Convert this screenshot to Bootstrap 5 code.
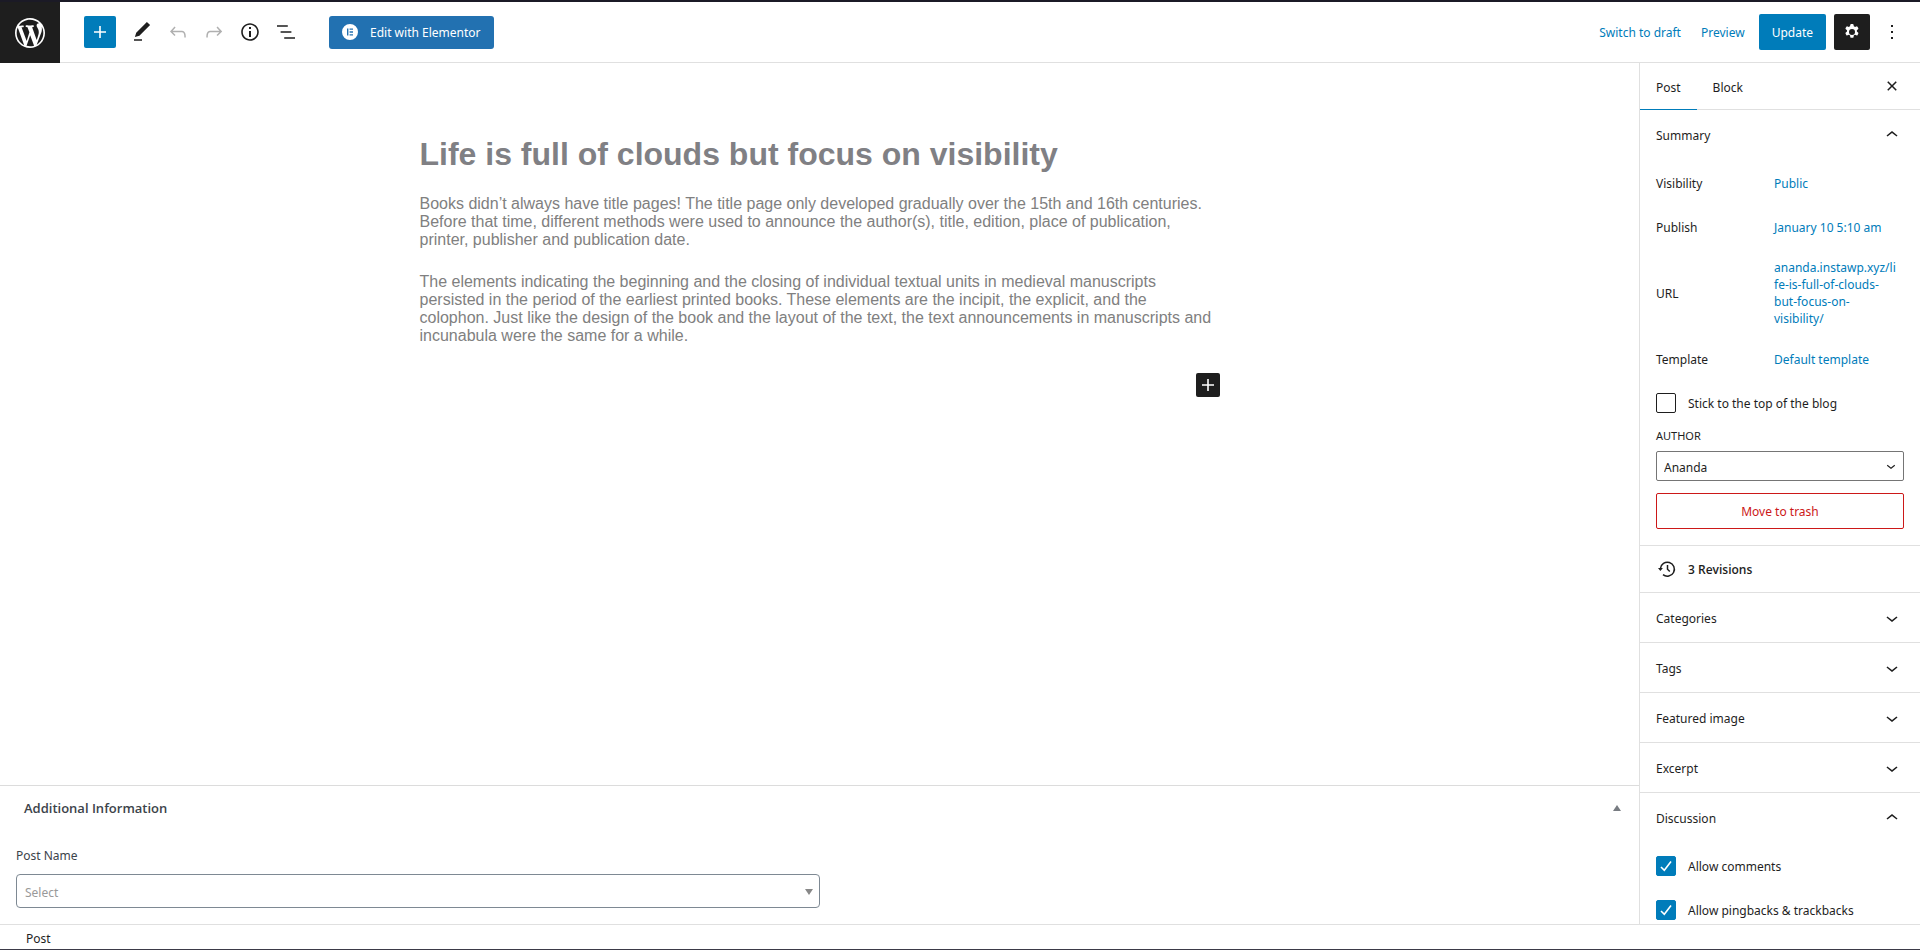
<!DOCTYPE html>
<html lang="en">
<head>
<meta charset="utf-8">
<meta name="viewport" content="width=device-width, initial-scale=1">
<title>Edit Post</title>
<link rel="stylesheet" href="https://cdn.jsdelivr.net/npm/bootstrap@5.3.0/dist/css/bootstrap.min.css">
<style>
:root { --ink: #1e1e1e; --accent: #007cba; --line: #e0e0e0; }
body { font: 12px/16px "Noto Sans", "Open Sans", sans-serif; color: var(--ink); background: #fff; border-top: 2px solid #1b1a26; border-bottom: 1px solid #3b3a48; }
a { color: var(--accent); text-decoration: none; }
svg { display: block; fill: currentColor; flex: none; }
.editor-bar { height: 61px; border-bottom: 1px solid var(--line); }
.site-logo { width: 60px; height: 61px; background: var(--ink); color: #fff; }
.btn { --bs-btn-font-size: 12px; --bs-btn-line-height: 16px; --bs-btn-border-radius: 2px; --bs-btn-border-width: 0; }
.tool-btn { width: 36px; height: 36px; --bs-btn-padding-x: 6px; --bs-btn-padding-y: 6px; --bs-btn-color: var(--ink); --bs-btn-disabled-color: #b0b0b0; --bs-btn-disabled-opacity: 1; }
.add-btn { width: 32px; height: 32px; --bs-btn-padding-x: 4px; --bs-btn-padding-y: 4px; --bs-btn-color: #fff; --bs-btn-bg: var(--accent); }
.elementor-btn { height: 33px; margin-left: 25px; --bs-btn-padding-x: 13px; --bs-btn-padding-y: 0; --bs-btn-color: #fff; --bs-btn-bg: #2271b1; --bs-btn-border-radius: 3px; }
.update-btn { height: 36px; --bs-btn-padding-x: 13px; --bs-btn-padding-y: 0; --bs-btn-color: #fff; --bs-btn-bg: var(--accent); }
.settings-btn { --bs-btn-color: #fff; --bs-btn-bg: var(--ink); }
.bar-text { padding-top: 2px; }
.bar-actions { padding-right: 10px; }
.preview-link { margin: 0 14px 0 20px; }
.canvas { font-family: "Liberation Sans", Arial, sans-serif; font-size: 16px; line-height: 18px; color: #808080; padding-top: 73px; }
.canvas-column { max-width: 800px; }
.canvas h1 { font-size: 32px; line-height: 37px; font-weight: 700; margin-bottom: 22px; color: #808084; }
.canvas p { margin-bottom: 24px; }
.insert-btn { width: 24px; height: 24px; --bs-btn-padding-x: 0; --bs-btn-padding-y: 0; --bs-btn-color: #fff; --bs-btn-bg: var(--ink); }
.meta-area { border-top: 1px solid #dcdcdc; color: #3c434a; height: 139px; }
.meta-head { padding: 13px 2px 0 8px; }
.meta-title { font-size: 13px; line-height: 18px; font-weight: 600; font-family: "Open Sans", sans-serif; }
.meta-label { margin: 31px 0 10px; }
.meta-select { width: 804px; max-width: 100%; height: 34px; border: 1px solid #7e8993; border-radius: 4px; color: #999; padding: 3px 8px 0; font-size: 12px; background: #fff; appearance: none; }
.meta-arrow { right: 7px; top: 15px; color: #888; pointer-events: none; }
.settings-side { width: 281px; border-left: 1px solid var(--line); overflow: hidden; }
.side-tabs { height: 47px; border-bottom: 1px solid var(--line); }
.side-tab { border: 0; background: none; padding: 4px 16px 0; color: var(--ink); }
.side-tab.active { box-shadow: 0 1px 0 var(--accent); }
.close-btn { margin: 5px 10px 0 auto; }
.panel-toggle { border: 0; background: none; width: 100%; height: 49px; padding: 2px 16px 0; color: var(--ink); text-align: left; }
.panel-toggle svg { margin-top: -2px; }
.panel-line { border-bottom: 1px solid var(--line); }
.panel-row { min-height: 36px; margin-bottom: 8px; padding-top: 4px; }
.panel-row > span { width: 118px; flex: none; line-height: 17px; }
.panel-row a { line-height: 17px; word-break: break-all; }
.url-row { min-height: 80px; }
.sticky-row { padding-top: 10px; }
.side-check { width: 20px; height: 20px; margin: 0; border: 1px solid var(--ink); border-radius: 2px !important; flex: none; background-size: 20px 20px; }
.side-check:checked { background-color: var(--accent); border-color: var(--accent); background-image: url("data:image/svg+xml,%3Csvg xmlns='http://www.w3.org/2000/svg' viewBox='0 0 20 20'%3E%3Cpath d='M5 11l3.300 3.300L15 5.500' fill='none' stroke='%23fff' stroke-width='1.600'/%3E%3C/svg%3E"); }
.author-label { font-size: 11px; text-transform: uppercase; margin: 15px 0 7px; }
.author-select { height: 30px; border: 1px solid #757575; border-radius: 2px; padding: 3px 7px 0; color: var(--ink); background: #fff; appearance: none; font-size: 12px; }
.author-arrow { right: 4px; top: 6px; pointer-events: none; }
.trash-btn { height: 36px; margin-top: 12px; --bs-btn-padding-y: 0; --bs-btn-border-width: 1px; --bs-btn-color: #cc1818; --bs-btn-border-color: #cc1818; }
.revisions { height: 47px; color: var(--ink); font-weight: 600; font-family: "Open Sans", sans-serif; padding: 0 16px 0 18px; }
.discussion-body { padding-top: 14px; }
.status-bar { height: 25px; border-top: 1px solid var(--line); padding: 4px 0 0 26px; }
</style>
</head>
<body class="d-flex flex-column vh-100 overflow-hidden">
<header class="editor-bar d-flex align-items-center flex-shrink-0">
  <a href="#" class="site-logo d-flex align-items-center justify-content-center align-self-start" aria-label="View Posts">
    <svg width="36" height="36" viewBox="-2 -2 24 24"><path d="M20 10c0-5.510-4.490-10-10-10C4.480 0 0 4.490 0 10c0 5.520 4.480 10 10 10 5.510 0 10-4.480 10-10zM7.780 15.370L4.370 6.220c.55-.02 1.170-.08 1.170-.08.5-.06.44-1.130-.06-1.110 0 0-1.450.11-2.370.11-.18 0-.37 0-.58-.01C4.120 2.690 6.870 1.110 10 1.110c2.330 0 4.450.87 6.050 2.340-.68-.11-1.650.39-1.650 1.580 0 .74.45 1.360.9 2.100.35.61.55 1.360.55 2.460 0 1.490-1.400 5-1.400 5l-3.030-8.370c.54-.02.82-.17.82-.17.5-.05.44-1.250-.06-1.220 0 0-1.440.12-2.380.12-.87 0-2.330-.12-2.330-.12-.5-.03-.56 1.200-.06 1.220l.92.08 1.260 3.410zM17.410 10c.24-.64.74-1.870.43-4.250.7 1.290 1.050 2.710 1.050 4.250 0 3.290-1.730 6.240-4.400 7.780.97-2.590 1.940-5.200 2.920-7.780zM6.100 18.090C3.120 16.650 1.110 13.530 1.110 10c0-1.300.23-2.480.72-3.590C3.250 10.300 4.670 14.200 6.100 18.090zm4.030-6.630l2.580 6.980c-.86.29-1.760.45-2.710.45-.79 0-1.570-.11-2.290-.33.81-2.380 1.620-4.740 2.420-7.100z"/></svg>
  </a>
  <div class="d-flex align-items-center ms-4">
    <button type="button" class="btn add-btn me-2" aria-label="Add block"><svg width="24" height="24" viewBox="0 0 24 24"><path d="M18 11.200h-5.200V6h-1.600v5.200H6v1.600h5.200V18h1.600v-5.200H18z"/></svg></button>
    <button type="button" class="btn tool-btn" aria-label="Tools"><svg width="24" height="24" viewBox="0 0 24 24"><path d="M20.100 5.100L16.900 2 6.200 12.700l-1.300 4.400 4.500-1.300L20.100 5.100zM4 20.800h8v-1.500H4v1.500z"/></svg></button>
    <button type="button" class="btn tool-btn" aria-label="Undo" disabled><svg width="24" height="24" viewBox="0 0 24 24"><path d="M18.300 11.700c-.6-.6-1.400-.9-2.300-.9H6.700l2.900-3.300-1.100-1-4.500 5L8.500 16l1-1-2.700-2.700H16c.5 0 .9.2 1.300.5 1 1 1 3.400 1 4.500v.3h1.500v-.2c0-1.500 0-4.300-1.500-5.700z"/></svg></button>
    <button type="button" class="btn tool-btn" aria-label="Redo" disabled><svg width="24" height="24" viewBox="0 0 24 24"><path d="M15.600 6.500l-1.100 1 2.900 3.300H8c-.9 0-1.700.3-2.300.9-1.400 1.500-1.400 4.200-1.400 5.600v.2h1.500v-.3c0-1.100 0-3.500 1-4.500.3-.3.7-.5 1.300-.5h9.200L14.500 15l1.100 1.100 4.600-4.600-4.600-5z"/></svg></button>
    <button type="button" class="btn tool-btn" aria-label="Details"><svg width="24" height="24" viewBox="0 0 24 24"><path d="M12 3.200c-4.800 0-8.800 3.900-8.800 8.800 0 4.800 3.900 8.800 8.800 8.800 4.800 0 8.800-3.900 8.800-8.800 0-4.800-4-8.800-8.800-8.800zm0 16c-4 0-7.200-3.300-7.200-7.200C4.800 8 8 4.800 12 4.800s7.200 3.300 7.200 7.200c0 4-3.200 7.200-7.200 7.200zM11 17h2v-6h-2v6zm0-8h2V7h-2v2z"/></svg></button>
    <button type="button" class="btn tool-btn" aria-label="List View"><svg width="24" height="24" viewBox="0 0 24 24"><path d="M13.800 5.200H3v1.500h10.800V5.200zm-3.600 12v1.500H21v-1.500H10.200zm7.200-6H6.600v1.500h10.800v-1.500z"/></svg></button>
  </div>
  <button type="button" class="btn elementor-btn d-flex align-items-center">
    <svg width="16" height="16" viewBox="0 0 16 16" class="me-2"><path fill-rule="evenodd" d="M8 0a8 8 0 1 0 0 16A8 8 0 0 0 8 0zM5 4.500h1.400v7H5zM7.600 4.500H11v1.300H7.600zM7.600 7.300H11v1.400H7.600zM7.600 10.200H11v1.300H7.600z"/></svg>
    <span class="bar-text ms-1">Edit with Elementor</span>
  </button>
  <div class="bar-actions d-flex align-items-center ms-auto">
    <a href="#" class="bar-text">Switch to draft</a>
    <a href="#" class="bar-text preview-link">Preview</a>
    <button type="button" class="btn update-btn me-2"><span class="d-block bar-text">Update</span></button>
    <button type="button" class="btn tool-btn settings-btn" aria-label="Settings"><svg width="24" height="24" viewBox="0 0 24 24"><path fill-rule="evenodd" d="M10.289 4.836A1 1 0 0 1 11.275 4h1.306a1 1 0 0 1 .987.836l.244 1.466c.421.150.816.380 1.165.673l1.392-.522a1 1 0 0 1 1.216.437l.653 1.130a1 1 0 0 1-.230 1.273l-1.148.944a6 6 0 0 1 0 1.347l1.148.944a1 1 0 0 1 .230 1.273l-.653 1.130a1 1 0 0 1-1.216.437l-1.392-.522a6 6 0 0 1-1.165.673l-.244 1.466a1 1 0 0 1-.987.836h-1.306a1 1 0 0 1-.986-.836l-.244-1.466a6 6 0 0 1-1.166-.673l-1.391.522a1 1 0 0 1-1.217-.437l-.653-1.130a1 1 0 0 1 .230-1.273l1.149-.944a6 6 0 0 1 0-1.347l-1.149-.944a1 1 0 0 1-.230-1.273l.653-1.130a1 1 0 0 1 1.217-.437l1.391.522a6 6 0 0 1 1.166-.673zM15 12a3 3 0 1 1-6 0 3 3 0 0 1 6 0z"/></svg></button>
    <button type="button" class="btn tool-btn ms-1" aria-label="Options"><svg width="24" height="24" viewBox="0 0 24 24"><path d="M13 19h-2v-2h2v2zm0-6h-2v-2h2v2zm0-6h-2V5h2v2z"/></svg></button>
  </div>
</header>

<div class="d-flex flex-grow-1 overflow-hidden">
  <div class="d-flex flex-column flex-grow-1 overflow-hidden">
    <main class="canvas flex-grow-1 overflow-hidden">
      <div class="canvas-column mx-auto">
        <h1>Life is full of clouds but focus on visibility</h1>
        <p>Books didn’t always have title pages! The title page only developed gradually over the 15th and 16th centuries. Before that time, different methods were used to announce the author(s), title, edition, place of publication, printer, publisher and publication date.</p>
        <p>The elements indicating the beginning and the closing of individual textual units in medieval manuscripts persisted in the period of the earliest printed books. These elements are the incipit, the explicit, and the colophon. Just like the design of the book and the layout of the text, the text announcements in manuscripts and incunabula were the same for a while.</p>
        <div class="d-flex justify-content-end pt-1"><button type="button" class="btn insert-btn" aria-label="Add block"><svg width="24" height="24" viewBox="0 0 24 24"><path d="M18 11.200h-5.200V6h-1.600v5.200H6v1.600h5.200V18h1.600v-5.200H18z"/></svg></button></div>
      </div>
    </main>
    <section class="meta-area flex-shrink-0 px-3">
      <div class="meta-head d-flex align-items-center justify-content-between">
        <h2 class="meta-title m-0">Additional Information</h2>
        <svg width="8" height="6" viewBox="0 0 8 6"><path fill="#787c82" d="M0 6l4-6 4 6z"/></svg>
      </div>
      <label for="post-name" class="meta-label d-block">Post Name</label>
      <div class="position-relative d-inline-block mw-100">
        <select id="post-name" class="meta-select"><option>Select</option></select>
        <svg width="8" height="6" viewBox="0 0 8 6" class="meta-arrow position-absolute"><path d="M0 0h8L4 6z"/></svg>
      </div>
    </section>
  </div>

  <aside class="settings-side flex-shrink-0">
    <div class="side-tabs d-flex">
      <button type="button" class="side-tab active">Post</button>
      <button type="button" class="side-tab">Block</button>
      <button type="button" class="btn tool-btn close-btn" aria-label="Close settings"><svg width="24" height="24" viewBox="0 0 24 24"><path d="M12 13.060l3.712 3.713 1.061-1.060L13.061 12l3.712-3.712-1.060-1.060L12 10.938 8.288 7.227l-1.061 1.060L10.939 12l-3.712 3.712 1.060 1.061L12 13.061z"/></svg></button>
    </div>
    <div class="panel-line pb-3">
      <button type="button" class="panel-toggle d-flex align-items-center justify-content-between">Summary
        <svg width="24" height="24" viewBox="0 0 24 24"><path d="M6.500 12.400L12 8l5.500 4.400-.9 1.200L12 10l-4.500 3.600-1-1.200z"/></svg></button>
      <div class="px-3 pt-1">
        <div class="panel-row d-flex align-items-center"><span>Visibility</span><a href="#">Public</a></div>
        <div class="panel-row d-flex align-items-center"><span>Publish</span><a href="#">January 10 5:10 am</a></div>
        <div class="panel-row url-row d-flex align-items-center"><span>URL</span><a href="#">ananda.instawp.xyz/li<br>fe-is-full-of-clouds-<br>but-focus-on-<br>visibility/</a></div>
        <div class="panel-row d-flex align-items-center"><span>Template</span><a href="#">Default template</a></div>
        <div class="sticky-row d-flex align-items-center"><input type="checkbox" class="form-check-input side-check" id="sticky"><label for="sticky" class="bar-text ps-2 ms-1">Stick to the top of the blog</label></div>
        <label for="author" class="author-label d-block">Author</label>
        <div class="position-relative">
          <select id="author" class="author-select d-block w-100"><option>Ananda</option></select>
          <svg width="18" height="18" viewBox="0 0 24 24" class="author-arrow position-absolute"><path d="M17.500 11.600L12 16l-5.500-4.400.9-1.200L12 14l4.500-3.600 1 1.200z"/></svg>
        </div>
        <button type="button" class="btn trash-btn w-100"><span class="d-block bar-text">Move to trash</span></button>
      </div>
    </div>
    <a href="#" class="revisions panel-line d-flex align-items-center"><svg width="18" height="18" viewBox="0 0 18 18" class="me-2"><path d="M2.400 8.500a7 7 0 1 1 2.600 6.200M9.500 5v4.300l2.300 2.200" fill="none" stroke="currentColor" stroke-width="1.500"/><path d="M0 8h4.900L2.400 11z"/></svg><span class="bar-text ms-1">3 Revisions</span></a>
    <div class="panel-line"><button type="button" class="panel-toggle d-flex align-items-center justify-content-between">Categories <svg width="24" height="24" viewBox="0 0 24 24"><path d="M17.500 11.600L12 16l-5.500-4.400.9-1.200L12 14l4.500-3.600 1 1.200z"/></svg></button></div>
    <div class="panel-line"><button type="button" class="panel-toggle d-flex align-items-center justify-content-between">Tags <svg width="24" height="24" viewBox="0 0 24 24"><path d="M17.500 11.600L12 16l-5.500-4.400.9-1.200L12 14l4.500-3.600 1 1.200z"/></svg></button></div>
    <div class="panel-line"><button type="button" class="panel-toggle d-flex align-items-center justify-content-between">Featured image <svg width="24" height="24" viewBox="0 0 24 24"><path d="M17.500 11.600L12 16l-5.500-4.400.9-1.200L12 14l4.500-3.600 1 1.200z"/></svg></button></div>
    <div class="panel-line"><button type="button" class="panel-toggle d-flex align-items-center justify-content-between">Excerpt <svg width="24" height="24" viewBox="0 0 24 24"><path d="M17.500 11.600L12 16l-5.500-4.400.9-1.200L12 14l4.500-3.600 1 1.200z"/></svg></button></div>
    <div>
      <button type="button" class="panel-toggle d-flex align-items-center justify-content-between">Discussion <svg width="24" height="24" viewBox="0 0 24 24"><path d="M6.500 12.400L12 8l5.500 4.400-.9 1.200L12 10l-4.500 3.600-1-1.200z"/></svg></button>
      <div class="discussion-body px-3">
        <div class="d-flex align-items-center mb-4"><input type="checkbox" class="form-check-input side-check" id="comments" checked><label for="comments" class="bar-text ps-2 ms-1">Allow comments</label></div>
        <div class="d-flex align-items-center"><input type="checkbox" class="form-check-input side-check" id="pings" checked><label for="pings" class="bar-text ps-2 ms-1">Allow pingbacks &amp; trackbacks</label></div>
      </div>
    </div>
  </aside>
</div>
<footer class="status-bar d-flex align-items-center flex-shrink-0">Post</footer>
<script src="https://cdn.jsdelivr.net/npm/bootstrap@5.3.0/dist/js/bootstrap.bundle.min.js"></script>
</body>
</html>
